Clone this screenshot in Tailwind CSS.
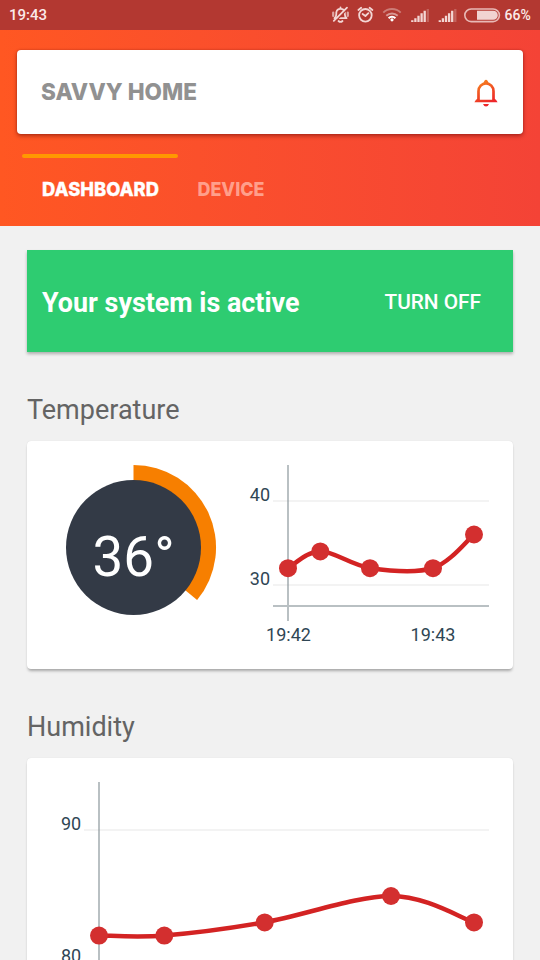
<!DOCTYPE html>
<html lang="en">
<head>
<meta charset="utf-8">
<meta name="viewport" content="width=device-width, initial-scale=1">
<title>Savvy Home</title>
<script src="https://cdn.jsdelivr.net/npm/@tailwindcss/browser@4"></script>
</head>
<body class="w-[540px] h-[960px] overflow-hidden bg-[#f1f1f1] font-[Roboto,sans-serif]">
<div class="flex h-[960px] flex-col overflow-hidden">
  <div class="flex h-[30px] shrink-0 items-center justify-between bg-[#b33831] pl-[9px] pr-[7px] text-[#fbeae9]">
    <span class="text-[15px] font-medium leading-[30px]">19:43</span>
    <svg class="h-[30px] w-[213px]" viewBox="320 0 213 30" fill="none" stroke="#f3d6d4" stroke-linecap="round" stroke-linejoin="round">
      <g stroke-width="1.8">
        <path d="M334.5 18.2 Q336.3 16.8 336.3 14 V12.5 A4.3 4.3 0 0 1 344.8 12.5 V14 Q344.8 16.8 346.6 18.2 Z"/>
        <path d="M340.5 7.5 V8 M338.5 21 Q340.5 22.8 342.5 21"/>
        <path d="M333.2 12.5 V16 M347.8 12.5 V16" opacity=".7" stroke-width="2.2"/>
        <path d="M335 21.7 L348 8.6" stroke="#b33831" stroke-width="1.4"/>
        <path d="M333.8 20.9 L347 7.6"/>
      </g>
      <g stroke-width="1.8">
        <circle cx="365.4" cy="15.3" r="6.3"/>
        <path d="M362.6 14 L365.4 16 L368.4 13.2"/>
        <path d="M358.4 10 L361.2 7.7 M372.4 10 L369.6 7.7"/>
      </g>
      <g stroke-width="2" stroke-linecap="butt">
        <path d="M383.3 12.6 A12.5 12.5 0 0 1 400.7 12.6" stroke="#cc7c77"/>
        <path d="M386.3 15.8 A8.2 8.2 0 0 1 397.7 15.8" stroke="#d99894"/>
        <path d="M388.6 18.2 A4.8 4.8 0 0 1 395.4 18.2" stroke="#fff"/>
        <circle cx="392" cy="19.8" r="1.6" fill="#fff" stroke="none"/>
      </g>
      <g stroke-width="2.3" stroke-linecap="butt">
        <path d="M412.3 22 V20.3 M415.4 22 V18.2 M418.5 22 V15.8 M421.6 22 V13.2 M424.7 22 V10.8"/>
        <path d="M427.8 22 V9" stroke="#c4645e"/>
        <path d="M439.8 22 V20.3 M442.9 22 V18.2 M446 22 V15.8 M449.1 22 V13.2 M452.2 22 V10.8"/>
        <path d="M455.3 22 V9" stroke="#c4645e"/>
      </g>
      <rect x="464.8" y="9" width="34.6" height="12.6" rx="6.3" stroke="#e9b9b6" stroke-width="1.6"/>
      <path d="M477 10.8 H493.3 A4.5 4.5 0 0 1 493.3 19.8 H477 Z" fill="#f1d3d1" stroke="none"/>
      <text x="504.6" y="20.4" font-family="Roboto" font-size="15" font-weight="500" fill="#fbeae9" stroke="none" textLength="26.2" lengthAdjust="spacingAndGlyphs">66%</text>
    </svg>
  </div>

  <header class="flex h-[196px] shrink-0 flex-col bg-linear-to-r from-[#ff5722] to-[#f44336] pt-5">
    <div class="mx-[17px] flex h-[84px] items-center justify-between rounded-[4px] bg-white pl-6 pr-[25px] shadow-[0_2px_4px_rgba(90,0,0,0.45),0_0_2px_rgba(90,0,0,0.3)]">
      <svg class="h-[30px] w-[170px]" viewBox="41 77 170 30" role="img" aria-label="Savvy Home">
        <text x="41" y="99.5" font-family="Inter" font-weight="800" font-size="23.6" fill="#919191" textLength="156" lengthAdjust="spacingAndGlyphs">SAVVY HOME</text>
      </svg>
      <svg class="h-[30px] w-6" viewBox="474 77 24 30" fill="none">
        <defs>
          <linearGradient id="bell" gradientUnits="userSpaceOnUse" x1="479" y1="80" x2="492" y2="106">
            <stop offset="0" stop-color="#f7871e"/><stop offset=".5" stop-color="#f04a24"/><stop offset="1" stop-color="#ed1c2c"/>
          </linearGradient>
        </defs>
        <path d="M478.5 100.5 V91.2 A7.5 7.8 0 0 1 493.5 91.2 V100.5" stroke="url(#bell)" stroke-width="2.7"/>
        <path d="M474.4 102.3 Q475.8 99.2 478 98.6 L479.6 99.8 H492.4 L494 98.6 Q496.2 99.2 497.6 102.3 Z" fill="url(#bell)"/>
        <path d="M483 84 Q484.4 79.7 486 79.7 Q487.6 79.7 489 84 Z" fill="url(#bell)"/>
        <path d="M483 103.9 H489 Q488 106.4 486 106.4 Q484 106.4 483 103.9 Z" fill="url(#bell)"/>
      </svg>
    </div>
    <nav class="mt-5 flex pl-[22px]">
      <div class="flex w-[156px] flex-col">
        <div class="h-1 rounded-full bg-[#ff9800]"></div>
        <svg class="mt-[17px] ml-5 h-7 w-[125px]" viewBox="42 175 125 28">
          <text x="42" y="195.8" font-family="Inter" font-weight="800" font-size="19" fill="#fff" stroke="#fff" stroke-width=".3" textLength="117" lengthAdjust="spacingAndGlyphs">DASHBOARD</text>
        </svg>
      </div>
      <svg class="mt-[21px] ml-[19px] h-7 w-[75px]" viewBox="197 175 75 28">
        <text x="197.5" y="195.8" font-family="Inter" font-weight="800" font-size="19" fill="#ff9f8b" textLength="67" lengthAdjust="spacingAndGlyphs">DEVICE</text>
      </svg>
    </nav>
  </header>

  <main class="flex flex-col px-[27px] pt-6">
    <section class="flex h-[102px] shrink-0 items-center justify-between bg-[#2ecc71] pl-[15px] pr-[32px] text-white shadow-[0_2px_3px_rgba(0,0,0,0.28)]">
      <p class="pt-[5px] text-[26.9px] font-bold whitespace-nowrap">Your system is active</p>
      <button class="pt-[4px] text-[20.8px] font-medium whitespace-nowrap">TURN OFF</button>
    </section>

    <h2 class="mt-10 h-[49px] text-[27px] leading-[36px] text-[#646464]">Temperature</h2>
    <section class="h-[228px] shrink-0 rounded-[4px] bg-white shadow-[0_3px_3px_-1px_rgba(0,0,0,0.3),0_0_1px_rgba(0,0,0,0.15)]">
      <svg class="block h-[228px] w-[486px]" viewBox="27 441 486 228" font-family="Roboto">
        <path d="M133.5 547.5 V465 A82.5 82.5 0 0 1 197.1 600.1 Z" fill="#f77f00"/>
        <circle cx="133.5" cy="547.5" r="67.5" fill="#333a46"/>
        <text x="92.6" y="576.3" font-size="55.5" fill="#fff" textLength="82" lengthAdjust="spacingAndGlyphs">36°</text>
        <path d="M273 501 H489 M273 585 H489" stroke="#f3f3f3" stroke-width="2"/>
        <path d="M288 465 V621 M273 606 H489" stroke="#7f8c92" stroke-opacity=".55" stroke-width="2" fill="none"/>
        <path d="M288 568 C293.4 565.2 306.6 551.3 320.3 551.3 C334 551.3 351.2 565.2 370 568 C388.8 570.8 415.7 573.6 433 568 C450.3 562.4 467.2 540.1 474 534.5" fill="none" stroke="#d32323" stroke-width="4.5"/>
        <g fill="#d32f2f">
          <circle cx="288" cy="568.2" r="9"/><circle cx="320.3" cy="551.4" r="9"/><circle cx="370" cy="568.2" r="9"/><circle cx="433" cy="568.2" r="9"/><circle cx="474" cy="534.5" r="9"/>
        </g>
        <g font-size="18" fill="#2f4654">
          <text x="249.8" y="501">40</text>
          <text x="249.8" y="585">30</text>
          <text x="288.5" y="640.5" text-anchor="middle">19:42</text>
          <text x="433" y="640.5" text-anchor="middle">19:43</text>
        </g>
      </svg>
    </section>

    <h2 class="mt-10 h-[49px] text-[27px] leading-[36px] text-[#646464]">Humidity</h2>
    <section class="h-[228px] shrink-0 rounded-[4px] bg-white shadow-[0_3px_3px_-1px_rgba(0,0,0,0.3),0_0_1px_rgba(0,0,0,0.15)]">
      <svg class="block h-[228px] w-[486px]" viewBox="27 758 486 228" font-family="Roboto">
        <path d="M84 830 H489 M84 962 H489" stroke="#f3f3f3" stroke-width="2"/>
        <path d="M99 782 V986" stroke="#7f8c92" stroke-opacity=".55" stroke-width="2"/>
        <path d="M99 935.5 C109.9 935.5 136.7 937.7 164.3 935.5 C191.9 933.3 226.9 928.9 264.7 922.3 C302.5 915.7 356.1 896 391 896 C425.9 896 460.2 917.9 474 922.3" fill="none" stroke="#d32323" stroke-width="4.5"/>
        <g fill="#d32f2f">
          <circle cx="99" cy="935.6" r="9"/><circle cx="164.3" cy="935.6" r="9"/><circle cx="264.7" cy="922.4" r="9"/><circle cx="391" cy="896" r="9"/><circle cx="474" cy="922.4" r="9"/>
        </g>
        <g font-size="18" fill="#2f4654">
          <text x="60.9" y="830">90</text>
          <text x="60.9" y="962">80</text>
        </g>
      </svg>
    </section>
  </main>
</div>
</body>
</html>
